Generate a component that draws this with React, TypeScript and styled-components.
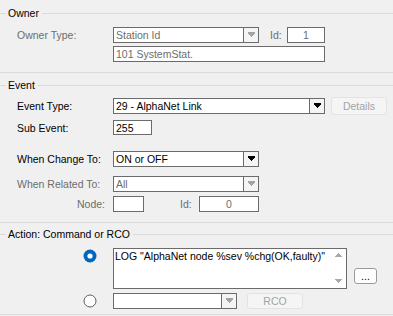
import React from 'react';
import styled, { createGlobalStyle } from 'styled-components';

const GlobalStyle = createGlobalStyle`
  html, body { margin: 0; padding: 0; background: #f0f0f0; }
  body {
    font-family: "Liberation Sans", Arial, sans-serif;
    font-size: 10.5px;
    color: #000;
  }
  * { box-sizing: border-box; }
`;

const Dialog = styled.div`
  width: 393px;
  height: 316px;
  overflow: hidden;
  background: #f0f0f0;
`;

const Group = styled.section<{ $top: number; $bottom: number }>`
  padding-top: ${p => p.$top}px;
  padding-bottom: ${p => p.$bottom}px;
  border-bottom: 1px solid #dadada;
`;

const Legend = styled.div`
  display: flex;
  align-items: center;
  height: 14px;
  line-height: 14px;

  &::before {
    content: '';
    width: 6px;
    height: 1px;
    background: #dadada;
    margin-right: 2px;
  }
  &::after {
    content: '';
    flex: 1;
    height: 1px;
    background: #dadada;
    margin-left: 3px;
  }
`;

const Row = styled.div<{ $h: number; $mt: number }>`
  display: flex;
  align-items: center;
  height: ${p => p.$h}px;
  margin-top: ${p => p.$mt}px;
`;

const Label = styled.span<{ $off?: boolean; $right?: boolean }>`
  width: 113px;
  flex: none;
  padding-left: 17px;
  padding-right: ${p => (p.$right ? 8 : 0)}px;
  text-align: ${p => (p.$right ? 'right' : 'left')};
  color: ${p => (p.$off ? '#6d6d6d' : '#000')};
  white-space: nowrap;
`;

const SideLabel = styled.span<{ $ml: number; $w: number }>`
  margin-left: ${p => p.$ml}px;
  width: ${p => p.$w}px;
  color: #6d6d6d;
`;

const Box = styled.div<{ $w: number; $h?: number; $off?: boolean; $ml?: number }>`
  display: flex;
  width: ${p => p.$w}px;
  height: ${p => p.$h ?? 16}px;
  margin-left: ${p => p.$ml ?? 0}px;
  border: 1px solid #6b6b6b;
  background: #fff;
  color: ${p => (p.$off ? '#6d6d6d' : '#000')};
  flex: none;
`;

const Value = styled.span<{ $center?: boolean }>`
  flex: 1;
  padding: 0 2px;
  line-height: 14px;
  white-space: nowrap;
  overflow: hidden;
  text-align: ${p => (p.$center ? 'center' : 'left')};
`;

const DropButton = styled.span`
  width: 15px;
  border-left: 1px solid #6b6b6b;
  background: #f4f4f4;
  display: flex;
  align-items: center;
  justify-content: center;
`;

const Button = styled.button<{ $w: number; $h: number; $ml: number; $off?: boolean }>`
  width: ${p => p.$w}px;
  height: ${p => p.$h}px;
  margin-left: ${p => p.$ml}px;
  padding: 0;
  font: inherit;
  border-radius: 3px;
  border: 1px solid ${p => (p.$off ? '#e3e3e3' : '#9a9a9a')};
  background: ${p => (p.$off ? '#f5f5f5' : '#fdfdfd')};
  color: ${p => (p.$off ? '#a3a3a3' : '#000')};
  flex: none;
`;

const RadioCell = styled.span<{ $top?: boolean }>`
  width: 113px;
  flex: none;
  align-self: ${p => (p.$top ? 'flex-start' : 'center')};
  padding-left: 83px;
  padding-top: ${p => (p.$top ? 1 : 0)}px;
  display: flex;
`;

const Memo = styled.div`
  display: flex;
  width: 234px;
  height: 41px;
  border: 1px solid #6b6b6b;
  background: #fff;
  flex: none;
`;

const MemoText = styled.div`
  flex: 1;
  padding: 1px 1px;
  line-height: 12px;
  white-space: nowrap;
  overflow: hidden;
`;

const ScrollCol = styled.div`
  width: 16px;
  display: flex;
  flex-direction: column;
  justify-content: space-between;
  align-items: center;
  padding: 4px 0 5px;
`;

const EllipsisButton = styled(Button)`
  align-self: flex-end;
  margin-bottom: 5px;
  line-height: 10px;
`;

const Arrow = ({ off }: { off?: boolean }) => (
  <svg width="7" height="6" shapeRendering="crispEdges" fill={off ? '#a3a3a3' : '#000'}>
    <rect x="0" y="0" width="7" height="2" />
    <rect x="1" y="2" width="5" height="1" />
    <rect x="2" y="3" width="3" height="1" />
    <rect x="3" y="4" width="1" height="1" />
  </svg>
);

const ScrollArrow = ({ up }: { up?: boolean }) => (
  <svg width="7" height="4" shapeRendering="crispEdges" fill="#a8a8a8">
    {up ? (
      <>
        <rect x="3" y="0" width="1" height="1" />
        <rect x="2" y="1" width="3" height="1" />
        <rect x="1" y="2" width="5" height="1" />
        <rect x="0" y="3" width="7" height="1" />
      </>
    ) : (
      <>
        <rect x="0" y="0" width="7" height="1" />
        <rect x="1" y="1" width="5" height="1" />
        <rect x="2" y="2" width="3" height="1" />
        <rect x="3" y="3" width="1" height="1" />
      </>
    )}
  </svg>
);

const Radio = ({ on }: { on?: boolean }) => (
  <svg width="14" height="14" viewBox="0 0 14 14">
    {on ? (
      <>
        <circle cx="7" cy="7" r="6.5" fill="#0067c0" />
        <circle cx="7" cy="7" r="2.6" fill="#fff" />
      </>
    ) : (
      <circle cx="7" cy="7" r="6" fill="#fff" stroke="#5f5f5f" strokeWidth="1" />
    )}
  </svg>
);

const Combo = ({ w, value, off, h }: { w: number; value: string; off?: boolean; h?: number }) => (
  <Box $w={w} $h={h} $off={off}>
    <Value>{value}</Value>
    <DropButton>
      <Arrow off={off} />
    </DropButton>
  </Box>
);

export default function App() {
  return (
    <Dialog>
      <GlobalStyle />

      <Group $top={6} $bottom={10}>
        <Legend>Owner</Legend>
        <Row $h={16} $mt={7}>
          <Label $off>Owner Type:</Label>
          <Combo w={146} value="Station Id" off />
          <SideLabel $ml={11} $w={17}>Id:</SideLabel>
          <Box $w={38} $off>
            <Value $center>1</Value>
          </Box>
        </Row>
        <Row $h={16} $mt={3}>
          <Label />
          <Box $w={212} $off>
            <Value>101 SystemStat.</Value>
          </Box>
        </Row>
      </Group>

      <Group $top={5} $bottom={10}>
        <Legend>Event</Legend>
        <Row $h={16} $mt={6}>
          <Label>Event Type:</Label>
          <Combo w={212} value="29 - AlphaNet Link" />
          <Button $w={56} $h={18} $ml={6} $off>Details</Button>
        </Row>
        <Row $h={15} $mt={6}>
          <Label>Sub Event:</Label>
          <Box $w={39} $h={15}>
            <Value>255</Value>
          </Box>
        </Row>
        <Row $h={16} $mt={16}>
          <Label>When Change To:</Label>
          <Combo w={146} value="ON or OFF" />
        </Row>
        <Row $h={16} $mt={9}>
          <Label $off>When Related To:</Label>
          <Combo w={146} value="All" off />
        </Row>
        <Row $h={16} $mt={4}>
          <Label $off $right>Node:</Label>
          <Box $w={31} $off />
          <SideLabel $ml={36} $w={19}>Id:</SideLabel>
          <Box $w={60} $off>
            <Value $center>0</Value>
          </Box>
        </Row>
      </Group>

      <Group $top={4} $bottom={5}>
        <Legend>Action: Command or RCO</Legend>
        <Row $h={41} $mt={7}>
          <RadioCell $top>
            <Radio on />
          </RadioCell>
          <Memo>
            <MemoText>LOG "AlphaNet node %sev %chg(OK,faulty)"</MemoText>
            <ScrollCol>
              <ScrollArrow up />
              <ScrollArrow />
            </ScrollCol>
          </Memo>
          <EllipsisButton $w={23} $h={16} $ml={7}>...</EllipsisButton>
        </Row>
        <Row $h={16} $mt={4}>
          <RadioCell>
            <Radio />
          </RadioCell>
          <Combo w={124} value="" off />
          <Button $w={56} $h={16} $ml={10} $off>RCO</Button>
        </Row>
      </Group>
    </Dialog>
  );
}
